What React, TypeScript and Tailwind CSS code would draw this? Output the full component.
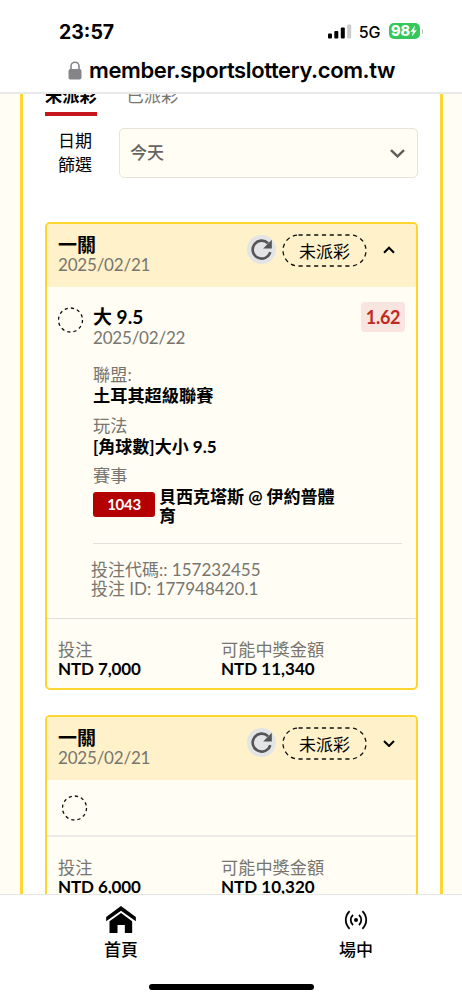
import React from 'react';

interface Bet {
    title: string;
    date: string;
    open: boolean;
    stake: string;
    payout: string;
}

const bets: Bet[] = [
    { title: '一關', date: '2025/02/21', open: true, stake: 'NTD 7,000', payout: 'NTD 11,340' },
    { title: '一關', date: '2025/02/21', open: false, stake: 'NTD 6,000', payout: 'NTD 10,320' },
];

const DashedCircle: React.FC = () => (
    <svg width="26" height="26" viewBox="0 0 26 26" fill="none" className="shrink-0">
        <circle cx="12.5" cy="13" r="12" stroke="#111" strokeWidth="1.3" strokeDasharray="3.2 3.083" />
    </svg>
);

const RefreshIcon: React.FC = () => (
    <svg width="29" height="29" viewBox="0 0 29 29" fill="none">
        <path d="M23.300 17.200A9 9 0 1 1 21 8.200" stroke="#555" strokeWidth="2.6" />
        <path d="M24.800 4.800v8.600h-8.600z" fill="#555" />
    </svg>
);

const StatusPill: React.FC = () => (
    <div className="relative flex h-[33px] w-[85px] items-center justify-center pt-0.5 text-[17px] leading-5 text-black">
        <svg width="85" height="33" viewBox="0 0 85 33" fill="none" className="absolute inset-0">
            <rect x="1" y="1" width="83" height="31" rx="15.5" stroke="#111" strokeWidth="1.3" strokeDasharray="4.2 3.6" />
        </svg>
        <span>未派彩</span>
    </div>
);

const StatusBar: React.FC = () => (
    <div className="flex h-[51px] items-end justify-between pr-[39px] pl-[59px]">
        <span className="mb-[5px] text-[19.5px] leading-7 font-bold">23:57</span>
        <div className="flex items-center pb-[9px]">
            <svg width="24" height="15" viewBox="0 0 24 15">
                <rect x="0" y="9.5" width="4" height="5" rx="1" />
                <rect x="6.3" y="7" width="4" height="7.5" rx="1" />
                <rect x="12.8" y="3.5" width="4" height="11" rx="1" />
                <rect x="19.2" y="0.5" width="4" height="14" rx="1" fill="#cbcbcb" />
            </svg>
            <span className="mt-0.5 ml-[7px] text-[16px] leading-5 font-medium">5G</span>
            <div className="ml-2 flex h-4 w-[31px] items-center justify-center rounded-[5px] bg-[#34c759] text-[14.5px] leading-4 font-extrabold text-white">
                98
                <svg width="7" height="12" viewBox="0 0 7 12" fill="#fff">
                    <path d="M5 0.5 0.3 6.8h2.6L1.9 11.5 6.8 5.2H4.1z" />
                </svg>
            </div>
            <span className="ml-0.5 h-[5px] w-[1.5px] rounded-r bg-[#bbb]" />
        </div>
    </div>
);

const BetDetail: React.FC = () => (
    <div className="h-[332px] border-b border-[#e3e0dc] pt-[15px] pr-[11px] pl-[11px]">
        <div className="flex items-start">
            <div className="mt-[5px] w-[35px]">
                <DashedCircle />
            </div>
            <div className="flex-1">
                <p className="mt-1 text-[19px] leading-[21px] font-bold">大 9.5</p>
                <p className="text-[17px] leading-[21px] tracking-[-0.2px] text-[#77756f]">2025/02/22</p>
            </div>
            <span className="flex h-[30px] w-11 items-center justify-center rounded bg-[#f8e5df] pt-px text-[18px] font-bold tracking-[-0.3px] text-[#bd2a22]">1.62</span>
        </div>
        <div className="ml-[35px] pt-[15.500px] text-[17px] leading-[21px]">
            <p className="text-[17.2px] text-[#77756f]">聯盟:</p>
            <p className="text-[17.2px] font-bold">土耳其超級聯賽</p>
            <p className="mt-[9px] text-[17.2px] text-[#77756f]">玩法</p>
            <p className="font-bold">[角球數]大小 9.5</p>
            <p className="mt-2 text-[17.2px] text-[#77756f]">賽事</p>
            <div className="mt-px flex">
                <span className="mt-[5px] flex h-[25px] w-[62px] items-center justify-center rounded-[3px] bg-[#b30000] pt-px text-[15px] font-bold tracking-[-0.3px] text-white">1043</span>
                <p className="ml-1 w-[180px] leading-[19px] font-bold">貝西克塔斯 @ 伊約普體育</p>
            </div>
        </div>
        <div className="mt-[18.500px] mr-[3px] ml-[35px] border-t border-[#e3e0dc]" />
        <div className="mt-4 ml-[33px] text-[17px] leading-[19px] text-[#77756f]">
            <p>投注代碼:: 157232455</p>
            <p>投注 ID: 177948420.1</p>
        </div>
    </div>
);

const BetCard: React.FC<{ bet: Bet }> = ({ bet }) => (
    <div className="mb-[25px] rounded-[5px] border-2 border-[#fdd52f] bg-[#fffdf4]">
        <div className="flex h-[63px] items-start rounded-t-[3px] bg-[#fff1c9] pt-[10px] pl-3">
            <div className="-ml-px flex-1">
                <p className="text-[19px] leading-[21px] font-bold">{bet.title}</p>
                <p className="text-[17px] leading-5 tracking-[-0.2px] text-[#77756f]">{bet.date}</p>
            </div>
            <div className="mt-px mr-1.5 flex h-[29px] w-[29px] items-center justify-center rounded-full bg-[#e3e4e6]">
                <RefreshIcon />
            </div>
            <StatusPill />
            <svg width="12" height="8" viewBox="0 0 12 8" fill="none" className="mt-[12px] mr-[21px] ml-4">
                <path d={bet.open ? 'M1 6.7 6 1.7l5 5' : 'M1 2l5 5 5-5'} stroke="#000" strokeWidth="2" />
            </svg>
        </div>
        {bet.open ? (
            <BetDetail />
        ) : (
            <div className="flex h-[57px] items-center border-b-2 border-[#eeebe6] pl-[15px]">
                <DashedCircle />
            </div>
        )}
        <div className="-ml-px flex pt-[21px] pb-[10px] pl-3 text-[17px] leading-[19px]">
            <div className="w-[163px]">
                <p className="text-[17.2px] text-[#77756f]">投注</p>
                <p className="font-bold tracking-[-0.1px]">{bet.stake}</p>
            </div>
            <div>
                <p className="text-[17.2px] text-[#77756f]">可能中獎金額</p>
                <p className="font-bold">{bet.payout}</p>
            </div>
        </div>
    </div>
);

const App: React.FC = () => {
    return (
        <div className="flex h-[1000px] w-[462px] flex-col overflow-hidden bg-white font-['Lato','Noto_Sans_CJK_TC',sans-serif] text-black">
            <header className="h-[94px] shrink-0 border-b-2 border-[#e9e9e9] bg-white font-['Inter',sans-serif]">
                <StatusBar />
                <div className="flex items-center pt-1 pl-[68px]">
                    <svg width="14" height="19" viewBox="0 0 14 19" fill="none">
                        <path d="M3 9V5.2a4 4 0 0 1 8 0V9" stroke="#858489" strokeWidth="1.6" />
                        <rect x="0.5" y="8" width="13" height="10.5" rx="2" fill="#858489" />
                    </svg>
                    <span className="ml-[7px] text-[22px] leading-[30px] font-semibold tracking-[-0.38px]">member.sportslottery.com.tw</span>
                </div>
            </header>

            <main className="flex h-[800px] shrink-0 overflow-hidden bg-[#fffdf4] px-5">
                <div className="w-[423px] shrink-0 border-x-[3px] border-[#fdd835] bg-white px-[22px]">
                    <div className="-mt-[10px] flex h-8 gap-[30px] text-[17.2px] leading-6">
                        <span className="h-8 border-b-4 border-[#c4161c] font-bold">未派彩</span>
                        <span className="text-[#77756f]">已派彩</span>
                    </div>
                    <div className="mt-3 flex h-[50px]">
                        <p className="mt-px ml-[13px] w-[61px] pr-6 text-[17px] leading-6">日期篩選</p>
                        <div className="flex flex-1 items-center justify-between rounded-[5px] border border-[#e9e4da] bg-[#fffdf4] pr-3 pl-[10px] text-[17px] font-medium text-[#66645f]">
                            今天
                            <svg width="15" height="9" viewBox="0 0 15 9" fill="none">
                                <path d="M1 1.2 7.5 7.4 14 1.2" stroke="#5f5d59" strokeWidth="2.4" />
                            </svg>
                        </div>
                    </div>
                    <div className="mt-11">
                        {bets.map((bet, index) => (
                            <BetCard key={index} bet={bet} />
                        ))}
                    </div>
                </div>
            </main>

            <footer className="flex h-[106px] shrink-0 flex-col items-center border-t border-[#e6e6e6] bg-white">
                <nav className="flex h-[89px] w-full text-[17px] leading-5 font-medium">
                    <a href="#" className="ml-[71px] flex w-[100px] flex-col items-center pt-[11px]">
                        <svg width="30" height="27" viewBox="78 63 89 81">
                            <path d="M122.500 63 167 96v13L122.500 77 78 109V96z" />
                            <path d="M122.500 84 156 109v35h-22v-24h-22v24H88v-35z" />
                        </svg>
                        <span className="mt-[7px]">首頁</span>
                    </a>
                    <a href="#" className="ml-[135px] flex w-[100px] flex-col items-center pt-[15px]">
                        <svg width="24" height="20" viewBox="0 0 24 20" fill="none" stroke="#000" strokeWidth="1.8">
                            <path d="M5.600 1.200C0.500 6.500 0.500 13.500 5.600 18.800M18.400 1.200c5.100 5.300 5.100 12.300 0 17.600M9 4.800c-3 3-3 7.400 0 10.400M15 4.800c3 3 3 7.400 0 10.400" />
                            <circle cx="12" cy="10" r="2" fill="#000" stroke="none" />
                        </svg>
                        <span className="mt-[10px]">場中</span>
                    </a>
                </nav>
                <div className="h-1.5 w-[165px] rounded-full bg-black" />
            </footer>
        </div>
    );
};

export default App;
